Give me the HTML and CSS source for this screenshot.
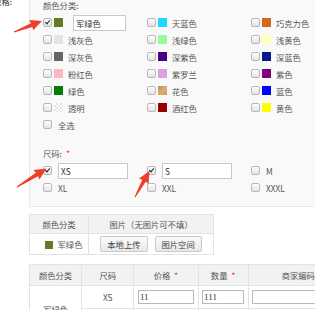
FILE: index.html
```html
<!DOCTYPE html>
<html lang="zh-CN">
<head>
    <meta charset="UTF-8">
    <meta name="viewport" content="width=device-width, initial-scale=1.0">
    <title>商品规格</title>
    <link rel="stylesheet" href="styles.css">
</head>
<body>

<div class="specRow">
    <div class="specLabel">规格:</div>
    <div class="specBox">
        <!-- 颜色分类 -->
        <div class="groupTitle">颜色分类:</div>
        <div class="optGrid">
            <div class="opt"><span class="cb on"></span><span class="sw army"></span><input class="colorName" value="军绿色"></div>
            <div class="opt"><span class="cb"></span><span class="sw skyblue"></span>天蓝色</div>
            <div class="opt"><span class="cb"></span><span class="sw choco"></span>巧克力色</div>

            <div class="opt"><span class="cb"></span><span class="sw lightgray"></span>浅灰色</div>
            <div class="opt"><span class="cb"></span><span class="sw lightgreen"></span>浅绿色</div>
            <div class="opt"><span class="cb"></span><span class="sw lightyellow"></span>浅黄色</div>

            <div class="opt"><span class="cb"></span><span class="sw darkgray"></span>深灰色</div>
            <div class="opt"><span class="cb"></span><span class="sw darkpurple"></span>深紫色</div>
            <div class="opt"><span class="cb"></span><span class="sw darkblue"></span>深蓝色</div>

            <div class="opt"><span class="cb"></span><span class="sw pink"></span>粉红色</div>
            <div class="opt"><span class="cb"></span><span class="sw violet"></span>紫罗兰</div>
            <div class="opt"><span class="cb"></span><span class="sw purple"></span>紫色</div>

            <div class="opt"><span class="cb"></span><span class="sw green"></span>绿色</div>
            <div class="opt"><span class="cb"></span><span class="sw floral"></span>花色</div>
            <div class="opt"><span class="cb"></span><span class="sw blue"></span>蓝色</div>

            <div class="opt"><span class="cb"></span><span class="sw clear"></span>透明</div>
            <div class="opt"><span class="cb"></span><span class="sw wine"></span>酒红色</div>
            <div class="opt"><span class="cb"></span><span class="sw yellow"></span>黄色</div>

            <div class="opt"><span class="cb"></span><span class="plain">全选</span></div>
        </div>

        <!-- 尺码 -->
        <div class="groupTitle sizeTitle">尺码:<span class="req">*</span></div>
        <div class="optGrid">
            <div class="opt"><span class="cb on"></span><input class="sizeName" value="XS"></div>
            <div class="opt"><span class="cb on"></span><input class="sizeName" value="S"></div>
            <div class="opt"><span class="cb"></span><span class="plain">M</span></div>
            <div class="opt"><span class="cb"></span><span class="plain">XL</span></div>
            <div class="opt"><span class="cb"></span><span class="plain">XXL</span></div>
            <div class="opt"><span class="cb"></span><span class="plain">XXXL</span></div>
        </div>
    </div>
</div>

<div class="tables">
    <table class="picTable">
        <colgroup><col class="w59"><col class="w125"></colgroup>
        <tr><th>颜色分类</th><th>图片（无图片可不填）</th></tr>
        <tr>
            <td class="colorCell"><span class="sw army small"></span>军绿色</td>
            <td><button class="btn">本地上传</button><button class="btn">图片空间</button></td>
        </tr>
    </table>

    <table class="skuTable">
        <colgroup><col class="w52"><col class="w52"><col class="w64"><col class="w50"><col class="w100"></colgroup>
        <tr><th>颜色分类</th><th>尺码</th><th>价格<span class="req">*</span></th><th>数量<span class="req">*</span></th><th>商家编码</th></tr>
        <tr>
            <td rowspan="2">军绿色</td>
            <td>XS</td>
            <td><input class="cellInput" value="11"></td>
            <td><input class="cellInput" value="111"></td>
            <td class="codeCell"><input class="cellInput code" value=""></td>
        </tr>
        <tr>
            <td>S</td>
            <td><input class="cellInput" value=""></td>
            <td><input class="cellInput" value=""></td>
            <td class="codeCell"><input class="cellInput code" value=""></td>
        </tr>
    </table>
</div>

<!-- 截图标注箭头 -->
<svg class="marks" width="315" height="310" viewBox="0 0 315 310">
    <g transform="translate(14 32) rotate(-21.45)">
        <polygon points="0,-0.5 19,-2 18.5,-5.5 30,0 18.5,5.5 19,2 0,0.5"/>
    </g>
    <g transform="translate(17 187) rotate(-32.1)">
        <polygon points="0,-0.5 23.5,-2 23,-5.5 34.8,0 23,5.5 23.5,2 0,0.5"/>
    </g>
    <g transform="translate(135 197) rotate(-60.85)">
        <polygon points="0,-0.5 18.5,-2 18,-5.5 29.8,0 18,5.5 18.5,2 0,0.5"/>
    </g>
</svg>

</body>
</html>
```

FILE: styles.css
```css
body {
    margin: 0;
    font-family: "Noto Sans CJK SC", "Liberation Sans", sans-serif;
    font-size: 8.3px;
    color: #555;
    background-color: #fff;
    overflow: hidden;
}

/* 规格 panel */
.specRow {
    display: flex;
    margin-top: -8px;
}

.specLabel {
    width: 12px;
    flex: none;
    display: flex;
    justify-content: flex-end;
    white-space: nowrap;
    line-height: 12px;
    margin-top: 3px;
    margin-right: 17px;
    color: #333;
}

.specBox {
    flex: 1;
    background-color: #f9f9f9;
    border: 1px solid #e8e8e8;
    padding: 6px 0 10px 13px;
}

.groupTitle {
    line-height: 12px;
    margin-bottom: 3px;
}

.sizeTitle {
    margin-top: 14px;
}

.req {
    color: #e4393c;
    margin-left: 4px;
}

.optGrid {
    display: grid;
    grid-template-columns: repeat(3, 104px);
    grid-auto-rows: 17px;
}

.opt {
    display: flex;
    align-items: center;
    white-space: nowrap;
}

.cb {
    position: relative;
    width: 9px;
    height: 9px;
    box-sizing: border-box;
    border: 1px solid #b8b8b8;
    border-radius: 2px;
    background: linear-gradient(#fdfdfd, #e4e4e4);
    margin-right: 2px;
    flex: none;
}

.cb.on::after {
    content: "";
    position: absolute;
    left: 2px;
    top: 0px;
    width: 2px;
    height: 4px;
    border-right: 1.5px solid #222;
    border-bottom: 1.5px solid #222;
    transform: rotate(40deg);
}

.plain {
    margin-left: 4px;
}

.sw {
    width: 9px;
    height: 9px;
    margin-right: 5px;
    flex: none;
}

.army { background-color: #657a27; }
.skyblue { background-color: #1ed9ff; }
.choco { background-color: #d2691e; }
.lightgray { background-color: #e4e4e4; }
.lightgreen { background-color: #98fb98; }
.lightyellow { background-color: #ffffbe; }
.darkgray { background-color: #666; }
.darkpurple { background-color: #4b0082; }
.darkblue { background-color: #0a1a8c; }
.pink { background-color: #ffb6c1; }
.violet { background-color: #dda0dd; }
.purple { background-color: #800080; }
.green { background-color: #008000; }
.floral { background: linear-gradient(135deg, #c48f55, #dcae74 60%, #c99660); }
.blue { background-color: #0000ff; }
.wine { background-color: #990000; }
.yellow { background-color: #ffff00; }

.clear {
    background-color: #fff;
    background-image: conic-gradient(#e2e2e2 25%, #fff 0 50%, #e2e2e2 0 75%, #fff 0);
    background-size: 4px 4px;
}

.colorName,
.sizeName {
    height: 16px;
    box-sizing: border-box;
    border: 1px solid #c9c9c9;
    background-color: #fff;
    padding: 0 2px;
    font: inherit;
    color: #333;
    outline: none;
}

.colorName {
    width: 53px;
    margin-left: 5px;
}

.sizeName {
    width: 70px;
    margin-left: 4px;
}

/* tables */
.tables {
    padding-left: 29px;
}

table {
    border-collapse: collapse;
    table-layout: fixed;
    border: 1px solid #e3e3e3;
}

th, td {
    border: 1px solid #e3e3e3;
    padding: 0;
    text-align: center;
    font-weight: normal;
    white-space: nowrap;
}

th {
    background-color: #f2f2f2;
}

.w59 { width: 59px; }
.w125 { width: 125px; }
.w52 { width: 52px; }
.w64 { width: 64px; }
.w50 { width: 50px; }
.w100 { width: 100px; }

.picTable {
    width: 184px;
    margin-top: 7px;
}

.picTable th {
    height: 18px;
}

.picTable td {
    height: 20px;
}

.colorCell {
    padding-left: 9px;
}

.colorCell .sw {
    display: inline-block;
    vertical-align: -1px;
    width: 8px;
    height: 8px;
    margin-right: 5px;
}

.btn {
    height: 16px;
    padding: 0 6px;
    border: 1px solid #c8c8c8;
    border-radius: 2px;
    background: linear-gradient(#fafafa, #e9e9e9);
    font: inherit;
    color: #444;
    vertical-align: middle;
}

.btn + .btn {
    margin-left: 7px;
}

.skuTable {
    width: 320px;
    margin-top: 9px;
}

.skuTable th {
    height: 20px;
}

.skuTable td {
    height: 22px;
}

.cellInput {
    width: 56px;
    height: 14px;
    box-sizing: border-box;
    border: 1px solid #b9b9b9;
    padding: 0 1px;
    font-family: "Liberation Serif", serif;
    font-size: 9px;
    color: #333;
    vertical-align: middle;
}

.skuTable td:nth-child(4) .cellInput,
.skuTable tr:last-child td:nth-child(3) .cellInput {
    width: 42px;
}

.codeCell {
    text-align: left;
    padding-left: 3px;
}

.cellInput.code {
    width: 90px;
}

/* annotation arrows over the screenshot */
.marks {
    position: absolute;
    left: 0;
    top: 0;
    pointer-events: none;
}

.marks polygon {
    fill: #ee3f2b;
}
```
